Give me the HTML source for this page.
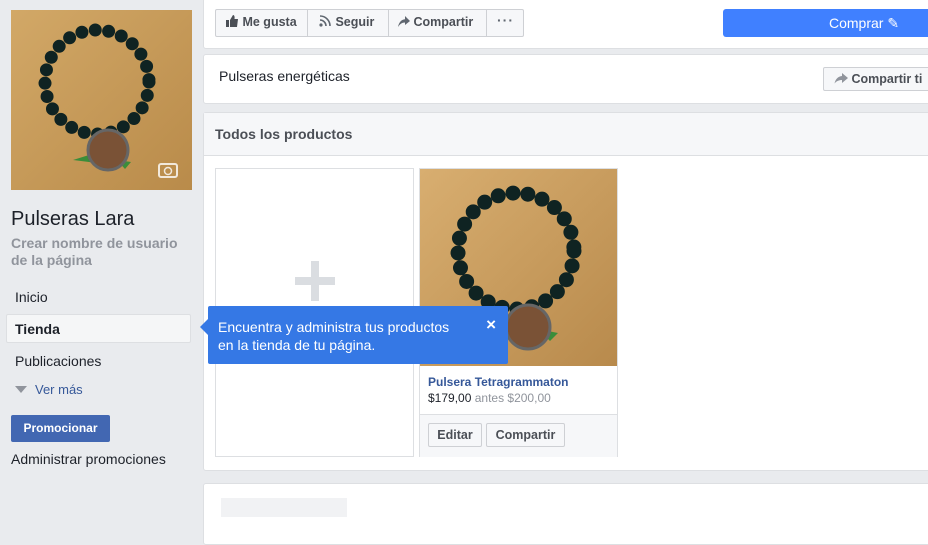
<!DOCTYPE html><html><head><meta charset="utf-8"><style>
body{margin:0;width:928px;height:524px;overflow:hidden;background:#e9ebee;font-family:"Liberation Sans",Helvetica,Arial,sans-serif;position:relative;color:#1d2129}
.a{position:absolute}
.card{position:absolute;background:#fff;border:1px solid #dddfe2;border-radius:3px}
.btn{position:absolute;background:#f6f7f9;border:1px solid #ced0d4;border-radius:2px;font-weight:bold;font-size:12.5px;color:#4b4f56;box-sizing:border-box;line-height:24px}
</style></head><body>
<!-- profile image -->
<div class="a" style="left:11px;top:10px;width:181px;height:180px;overflow:hidden">
<svg width="181" height="180"><defs><linearGradient id="w" x1="0" y1="0" x2="1" y2="1"><stop offset="0" stop-color="#d2a867"/><stop offset="1" stop-color="#b98b4a"/></linearGradient></defs>
<rect width="181" height="180" fill="url(#w)"/>
<ellipse cx="86" cy="72" rx="52" ry="52" fill="none" stroke="#0f2322" stroke-width="13" stroke-linecap="round" stroke-dasharray="0 13.5"/>
<path d="M62 150 l16 -5 l8 8z M106 150 l14 2 l-6 7z" fill="#3a8d3a"/>
<circle cx="97" cy="140" r="20" fill="#7a5236" stroke="#666" stroke-width="3"/>
<rect x="148" y="154" width="18" height="13" rx="2" fill="none" stroke="#fff" stroke-width="2" opacity=".8"/><circle cx="157" cy="161" r="3.5" fill="none" stroke="#fff" stroke-width="1.5" opacity=".8"/></svg></div>
<div class="a" style="left:11px;top:208px;font-size:20px;color:#1d2129">Pulseras Lara</div>
<div class="a" style="left:11px;top:235px;font-size:14px;font-weight:bold;color:#90949c;line-height:17px">Crear nombre de usuario<br>de la página</div>
<div class="a" style="left:15px;top:289px;font-size:14px">Inicio</div>
<div class="a" style="left:6px;top:314px;width:185px;height:29px;background:#f5f6f7;border:1px solid #dddfe2;border-radius:2px;box-sizing:border-box"></div>
<div class="a" style="left:15px;top:321px;font-size:14px;font-weight:bold">Tienda</div>
<div class="a" style="left:15px;top:353px;font-size:14px">Publicaciones</div>
<div class="a" style="left:15px;top:386px;width:0;height:0;border-left:6px solid transparent;border-right:6px solid transparent;border-top:7px solid #90949c"></div>
<div class="a" style="left:35px;top:382px;font-size:13px;color:#365899">Ver más</div>
<div class="a" style="left:11px;top:415px;width:99px;height:27px;background:#4267b2;border-radius:2px;color:#fff;font-weight:bold;font-size:12px;text-align:center;line-height:27px">Promocionar</div>
<div class="a" style="left:11px;top:451px;font-size:14px">Administrar promociones</div>

<!-- top card -->
<div class="card" style="left:203px;top:-2px;width:740px;height:50px;border-top:none"></div>
<div class="btn" style="left:215px;top:9px;width:309px;height:28px"></div>
<div class="a" style="left:307px;top:10px;width:1px;height:26px;background:#ced0d4"></div>
<div class="a" style="left:388px;top:10px;width:1px;height:26px;background:#ced0d4"></div>
<div class="a" style="left:486px;top:10px;width:1px;height:26px;background:#ced0d4"></div>
<div class="a" style="left:226px;top:15px;font-size:12.5px;font-weight:bold;color:#4b4f56"><svg width="13" height="12" style="vertical-align:-1px"><rect x="0" y="5" width="3" height="7" fill="#4b4f56"/><path d="M4 5 L7 0 Q9 0 8.5 4 L12 4 L11 12 L4 12z" fill="#4b4f56"/></svg> Me gusta</div>
<div class="a" style="left:319px;top:15px;font-size:12.5px;font-weight:bold;color:#4b4f56"><svg width="13" height="12" style="vertical-align:-1px"><circle cx="2" cy="10" r="1.6" fill="#606770"/><path d="M1 5a6 6 0 0 1 6 6M1 1a10 10 0 0 1 10 10" fill="none" stroke="#606770" stroke-width="1.6"/></svg> Seguir</div>
<div class="a" style="left:398px;top:15px;font-size:12.5px;font-weight:bold;color:#4b4f56"><svg width="12" height="12" style="vertical-align:-1px"><path d="M7 1 L12 6 L7 10 V7.5 C4 7.5 2 9 0 12 C1 7 3.5 4.5 7 4.2z" fill="#606770"/></svg> Compartir</div>
<div class="a" style="left:497px;top:12px;font-size:14px;color:#606770;letter-spacing:1px;font-weight:bold">···</div>
<div class="a" style="left:723px;top:9px;width:210px;height:28px;background:#4080ff;border-radius:3px;color:#fff;font-size:14px;line-height:28px"><span style="position:absolute;left:106px">Comprar ✎</span></div>

<!-- second card -->
<div class="card" style="left:203px;top:54px;width:740px;height:48px"></div>
<div class="a" style="left:219px;top:68px;font-size:14px">Pulseras energéticas</div>
<div class="btn" style="left:823px;top:67px;width:120px;height:24px;line-height:22px;padding-left:10px;white-space:nowrap"><svg width="14" height="12" style="vertical-align:-1px"><path d="M8 1 L14 6 L8 11 V8 C5 8 2.5 9 0.5 11.5 C1.5 7 4 4.5 8 4z" fill="#90949c"/></svg> Compartir ti</div>

<!-- products card -->
<div class="card" style="left:203px;top:112px;width:740px;height:357px"></div>
<div class="a" style="left:204px;top:113px;width:740px;height:42px;background:#f6f7f9;border-bottom:1px solid #dddfe2"></div>
<div class="a" style="left:215px;top:126px;font-size:14px;font-weight:bold;color:#4b4f56">Todos los productos</div>
<div class="a" style="left:215px;top:168px;width:199px;height:289px;border:1px solid #dddfe2;box-sizing:border-box;background:#fff"></div>
<div class="a" style="left:295px;top:277px;width:40px;height:8px;background:#dadde1"></div>
<div class="a" style="left:311px;top:261px;width:8px;height:40px;background:#dadde1"></div>
<div class="a" style="left:419px;top:168px;width:199px;height:289px;border:1px solid #dddfe2;box-sizing:border-box;background:#fff"></div>
<div class="a" style="left:420px;top:169px;width:197px;height:197px;overflow:hidden">
<svg width="197" height="197"><defs><linearGradient id="w2" x1="0" y1="0" x2="1" y2="1"><stop offset="0" stop-color="#d8ae70"/><stop offset="1" stop-color="#b88a4c"/></linearGradient></defs>
<rect width="197" height="197" fill="url(#w2)"/>
<ellipse cx="96" cy="82" rx="58" ry="58" fill="none" stroke="#0f2322" stroke-width="15" stroke-linecap="round" stroke-dasharray="0 15"/>
<path d="M70 165 l16 -5 l8 8z M118 160 l20 4 l-8 8z" fill="#3a8d3a"/>
<circle cx="108" cy="158" r="22" fill="#7a5236" stroke="#666" stroke-width="3"/></svg></div>
<div class="a" style="left:420px;top:414px;width:197px;height:42px;background:#f6f7f9;border-top:1px solid #dddfe2"></div>
<div class="a" style="left:428px;top:375px;font-size:12px;font-weight:bold;color:#365899">Pulsera Tetragrammaton</div>
<div class="a" style="left:428px;top:391px;font-size:12px">$179,00 <span style="color:#90949c">antes $200,00</span></div>
<div class="btn" style="left:428px;top:423px;width:54px;height:24px;line-height:22px;text-align:center">Editar</div>
<div class="btn" style="left:486px;top:423px;width:79px;height:24px;line-height:22px;text-align:center">Compartir</div>

<!-- tooltip -->
<div class="a" style="left:200px;top:318px;width:0;height:0;border-top:9px solid transparent;border-bottom:9px solid transparent;border-right:9px solid #3578e5"></div>
<div class="a" style="left:208px;top:306px;width:300px;height:58px;background:#3578e5;border-radius:2px;color:#fff;font-size:14px;line-height:18px;padding:12px 10px;box-sizing:border-box">Encuentra y administra tus productos<br>en la tienda de tu página.<span style="position:absolute;right:12px;top:10px;font-size:17px;font-weight:bold">×</span></div>

<!-- bottom card -->
<div class="card" style="left:203px;top:483px;width:740px;height:60px"></div>
<div class="a" style="left:221px;top:498px;width:126px;height:19px;background:#f1f2f4"></div>
</body></html>
